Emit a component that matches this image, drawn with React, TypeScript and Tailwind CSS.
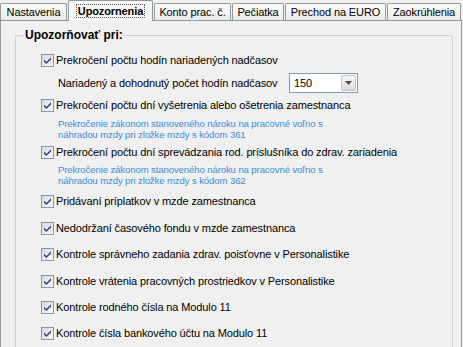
import React from "react";

const TABS = [
  { label: "Nastavenia", cls: "w-[67px]" },
  { label: "Upozornenia", cls: "ml-[1px] w-[85px]", active: true },
  { label: "Konto prac. č.", cls: "ml-[1px] w-[77px]" },
  { label: "Pečiatka", cls: "ml-[1px] w-[52px]" },
  { label: "Prechod na EURO", cls: "ml-[1px] w-[101px]" },
  { label: "Zaokrúhlenia", cls: "ml-[1px] w-[74px]" },
];

function Check() {
  return (
    <svg width="13" height="13" viewBox="0 0 13 13" className="shrink-0">
      <defs>
        <linearGradient id="cbfill" x1="0" y1="0" x2="1" y2="1">
          <stop offset="0" stopColor="#d6d8e2" />
          <stop offset="1" stopColor="#fbfbfb" />
        </linearGradient>
      </defs>
      <rect x="0.5" y="0.5" width="12" height="12" fill="url(#cbfill)" stroke="#8c95a8" />
      <path d="M3 5.6 L5.3 7.9 L10 3.2 L10 5.4 L5.3 10.1 L3 7.8Z" fill="#34446f" />
    </svg>
  );
}

function CheckRow({ label, className = "" }: { label: string; className?: string }) {
  return (
    <div className={`flex items-center gap-[2px] h-[13px] ${className}`}>
      <Check />
      <span className="whitespace-nowrap">{label}</span>
    </div>
  );
}

function Note({ lines, className = "" }: { lines: string[]; className?: string }) {
  return (
    <div className={`pl-[17px] text-[9.6px] leading-[11px] text-[#3b8ddb] ${className}`}>
      {lines.map((l) => (
        <div key={l} className="whitespace-nowrap">{l}</div>
      ))}
    </div>
  );
}

export default function App() {
  return (
    <div className="w-[463px] h-[347px] overflow-hidden bg-[#f0f0f0] text-black text-[11px] leading-[13px] tracking-[-0.12px] font-['Liberation_Sans',Arial,sans-serif]">
      {/* tabs */}
      <div className="flex items-end h-[20px] relative z-10">
        {TABS.map((t) =>
          t.active ? (
            <div key={t.label}
              className={`${t.cls} h-[21px] -mb-px border border-b-0 border-[#919b9c] rounded-t-[2px] bg-[#f7f7f7] flex items-center justify-center`}>
              <span className="font-bold px-[1px] border border-dotted border-[#555] leading-[12px]">{t.label}</span>
            </div>
          ) : (
            <div key={t.label}
              className={`${t.cls} h-[17px] border border-b-0 border-[#919b9c] rounded-t-[2px] bg-gradient-to-b from-[#fdfdfd] to-[#ebebeb] flex items-center justify-center whitespace-nowrap`}>
              {t.label}
            </div>
          )
        )}
      </div>

      {/* panel */}
      <div className="w-[462px] h-[340px] border border-[#919b9c] bg-[#f0f0f0] pt-[14px] pl-[14px]">
        <div className="relative w-[438px] h-[330px] border border-[#d0d0c8] rounded-[3px] pt-[18px] pl-[25px]">
          <div className="absolute left-[8px] -top-[8px] px-[1px] bg-[#f0f0f0] text-[12px] leading-[14px] font-bold tracking-normal">
            Upozorňovať pri:
          </div>

          <CheckRow label="Prekročení počtu hodín nariadených nadčasov" />

          <div className="mt-[6px] flex items-center h-[20px]">
            <span className="ml-[17px] w-[231px] whitespace-nowrap">Nariadený a dohodnutý počet hodín nadčasov</span>
            <div className="w-[69px] h-[20px] border border-[#7f9db9] bg-white flex items-center">
              <span className="flex-1 pl-[4px]">150</span>
              <div className="w-[15px] h-[16px] mr-[1px] border border-[#c4c4c4] rounded-[2px] bg-gradient-to-b from-[#f8f8f8] to-[#d9d9d9] flex items-center justify-center">
                <svg width="7" height="4" viewBox="0 0 7 4">
                  <path d="M0 0H7L3.5 4Z" fill="#4a4a4a" />
                </svg>
              </div>
            </div>
          </div>

          <CheckRow className="mt-[6px]" label="Prekročení počtu dní vyšetrenia alebo ošetrenia zamestnanca" />
          <Note className="mt-[6px]" lines={[
            "Prekročenie zákonom stanoveného nároku na pracovné voľno s",
            "náhradou mzdy pri zložke mzdy s kódom 361",
          ]} />

          <CheckRow className="mt-[6px]" label="Prekročení počtu dní sprevádzania rod. príslušníka do zdrav. zariadenia" />
          <Note className="mt-[5px]" lines={[
            "Prekročenie zákonom stanoveného nároku na pracovné voľno s",
            "náhradou mzdy pri zložke mzdy s kódom 362",
          ]} />

          <CheckRow className="mt-[9px]" label="Pridávaní príplatkov v mzde zamestnanca" />
          <CheckRow className="mt-[14px]" label="Nedodržaní časového fondu v mzde zamestnanca" />
          <CheckRow className="mt-[13px]" label="Kontrole správneho zadania zdrav. poisťovne v Personalistike" />
          <CheckRow className="mt-[14px]" label="Kontrole vrátenia pracovných prostriedkov v Personalistike" />
          <CheckRow className="mt-[13px]" label="Kontrole rodného čísla na Modulo 11" />
          <CheckRow className="mt-[13px]" label="Kontrole čísla bankového účtu na Modulo 11" />
        </div>
      </div>
    </div>
  );
}
